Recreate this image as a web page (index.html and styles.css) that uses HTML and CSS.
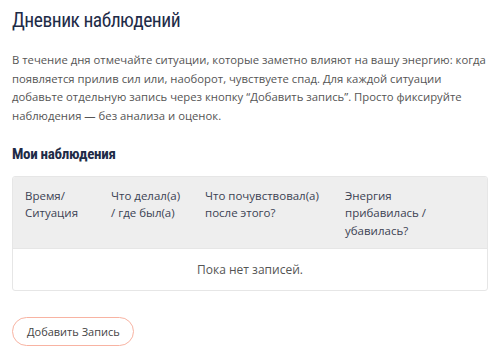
FILE: index.html
```html
<!DOCTYPE html>
<html lang="ru">
<head>
<meta charset="utf-8">
<link rel="stylesheet" href="styles.css">
</head>
<body>
<main class="page">
  <h1 class="title">Дневник наблюдений</h1>
  <p class="intro">В течение дня отмечайте ситуации, которые заметно влияют на вашу энергию: когда появляется прилив сил или, наоборот, чувствуете спад. Для каждой ситуации добавьте отдельную запись через кнопку “Добавить запись”. Просто фиксируйте наблюдения — без анализа и оценок.</p>
  <h2 class="subtitle">Мои наблюдения</h2>
  <table class="log">
    <colgroup>
      <col class="c1"><col class="c2"><col class="c3"><col class="c4">
    </colgroup>
    <thead>
      <tr>
        <th>Время/ Ситуация</th>
        <th>Что делал(а) / где был(а)</th>
        <th>Что почувствовал(а) после этого?</th>
        <th class="last">Энергия прибавилась / убавилась?</th>
      </tr>
    </thead>
    <tbody>
      <tr><td class="empty" colspan="4">Пока нет записей.</td></tr>
    </tbody>
  </table>
  <button class="add" type="button">Добавить Запись</button>
</main>
</body>
</html>
```
FILE: styles.css
```css
html, body { margin: 0; padding: 0; background: #fff; }
.page {
  padding: 8px 12px 0 12px;
  font-family: "Open Sans", "Noto Sans", sans-serif;
  color: #555;
}
.title {
  margin: 0;
  font-family: Roboto, "Noto Sans", sans-serif;
  font-stretch: 75%;
  font-weight: 400;
  font-size: 19.5px;
  letter-spacing: -0.5px;
  line-height: 25px;
  color: #1e2b47;
}
.intro {
  margin: 18px 0 0;
  font-size: 11.3px;
  line-height: 18.7px;
  color: #555;
}
.subtitle {
  margin: 18px 0 0;
  font-family: Roboto, "Noto Sans", sans-serif;
  font-stretch: 75%;
  font-weight: 700;
  font-size: 15px;
  letter-spacing: -0.3px;
  line-height: 20px;
  color: #1e2b47;
}
.log {
  margin-top: 12px;
  width: 476px;
  table-layout: fixed;
  border-collapse: separate;
  border-spacing: 0;
  border: 1px solid #e6e6e6;
  border-radius: 3px;
  overflow: hidden;
}
.c1 { width: 86px; }
.c2 { width: 94px; }
.c3 { width: 140px; }
.c4 { width: auto; }
.log th {
  background: #eeeeee;
  text-align: left;
  vertical-align: top;
  font-weight: 400;
  font-size: 11.5px;
  line-height: 17.5px;
  color: #3b4253;
  padding: 10px 8px 9px 12px;
}
.log th.last { padding-right: 36px; }
.log td.empty {
  text-align: center;
  font-size: 12px;
  line-height: 18px;
  padding: 12px 0 11px;
  color: #555;
  border-top: 1px solid #e6e6e6;
}
.add {
  display: block;
  margin-top: 26px;
  height: 29px;
  padding: 0 13px 0 14px;
  border: 1.5px solid #f8b3a2;
  border-radius: 15px;
  background: #fff;
  font-family: "Open Sans", "Noto Sans", sans-serif;
  font-size: 11px;
  color: #444;
  cursor: pointer;
}
```
